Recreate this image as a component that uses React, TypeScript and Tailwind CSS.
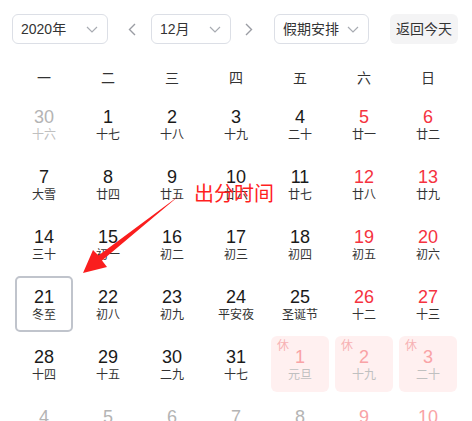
import React from 'react';

type Day = { n: number; lunar: string; kind: 'normal' | 'weekend' | 'out' | 'holiday' | 'outWeekend'; rest?: boolean; selected?: boolean };

const FONT = { fontFamily: '"Liberation Sans", "Noto Sans CJK SC", sans-serif' };

const rows: Day[][] = [
  [
    { n: 30, lunar: '十六', kind: 'out' },
    { n: 1, lunar: '十七', kind: 'normal' },
    { n: 2, lunar: '十八', kind: 'normal' },
    { n: 3, lunar: '十九', kind: 'normal' },
    { n: 4, lunar: '二十', kind: 'normal' },
    { n: 5, lunar: '廿一', kind: 'weekend' },
    { n: 6, lunar: '廿二', kind: 'weekend' },
  ],
  [
    { n: 7, lunar: '大雪', kind: 'normal' },
    { n: 8, lunar: '廿四', kind: 'normal' },
    { n: 9, lunar: '廿五', kind: 'normal' },
    { n: 10, lunar: '廿六', kind: 'normal' },
    { n: 11, lunar: '廿七', kind: 'normal' },
    { n: 12, lunar: '廿八', kind: 'weekend' },
    { n: 13, lunar: '廿九', kind: 'weekend' },
  ],
  [
    { n: 14, lunar: '三十', kind: 'normal' },
    { n: 15, lunar: '初一', kind: 'normal' },
    { n: 16, lunar: '初二', kind: 'normal' },
    { n: 17, lunar: '初三', kind: 'normal' },
    { n: 18, lunar: '初四', kind: 'normal' },
    { n: 19, lunar: '初五', kind: 'weekend' },
    { n: 20, lunar: '初六', kind: 'weekend' },
  ],
  [
    { n: 21, lunar: '冬至', kind: 'normal', selected: true },
    { n: 22, lunar: '初八', kind: 'normal' },
    { n: 23, lunar: '初九', kind: 'normal' },
    { n: 24, lunar: '平安夜', kind: 'normal' },
    { n: 25, lunar: '圣诞节', kind: 'normal' },
    { n: 26, lunar: '十二', kind: 'weekend' },
    { n: 27, lunar: '十三', kind: 'weekend' },
  ],
  [
    { n: 28, lunar: '十四', kind: 'normal' },
    { n: 29, lunar: '十五', kind: 'normal' },
    { n: 30, lunar: '二九', kind: 'normal' },
    { n: 31, lunar: '十七', kind: 'normal' },
    { n: 1, lunar: '元旦', kind: 'holiday', rest: true },
    { n: 2, lunar: '十九', kind: 'holiday', rest: true },
    { n: 3, lunar: '二十', kind: 'holiday', rest: true },
  ],
  [
    { n: 4, lunar: '廿一', kind: 'out' },
    { n: 5, lunar: '廿二', kind: 'out' },
    { n: 6, lunar: '廿三', kind: 'out' },
    { n: 7, lunar: '廿四', kind: 'out' },
    { n: 8, lunar: '廿五', kind: 'out' },
    { n: 9, lunar: '廿六', kind: 'outWeekend' },
    { n: 10, lunar: '廿七', kind: 'outWeekend' },
  ],
];

function ChevronDown() {
  return (
    <svg width="12" height="7" viewBox="0 0 12 7" fill="none">
      <polyline points="1,1 6,6 11,1" stroke="#a8abb2" strokeWidth="1.2" />
    </svg>
  );
}

function Select({ label, width }: { label: string; width: string }) {
  return (
    <div className={`${width} h-[30px] flex items-center justify-between border border-[#dcdfe6] rounded-[6px] pl-[8px] pr-[9px] text-[14px] text-[#333]`}>
      <span>{label}</span>
      <ChevronDown />
    </div>
  );
}

function Cell({ d }: { d: Day }) {
  const numColor =
    d.kind === 'weekend' ? 'text-[#f5333f]' :
    d.kind === 'out' ? 'text-[#b4b4b4]' :
    d.kind === 'holiday' || d.kind === 'outWeekend' ? 'text-[#f9a3a6]' : 'text-[#1a1a1a]';
  const lunarColor =
    d.kind === 'out' || d.kind === 'holiday' || d.kind === 'outWeekend' ? 'text-[#c0c0c0]' : 'text-[#333]';
  const box = d.selected
    ? 'border-2 border-[#c0c4cc] rounded-[5px] pt-[9px]'
    : d.rest
    ? 'bg-[#fff0f0] rounded-[6px] pt-[11px]'
    : 'pt-[11px]';
  return (
    <div className="h-[60px] px-[3px] py-[2px]">
      <div className={`relative h-[56px] flex flex-col items-center ${box}`}>
        {d.rest && <span className="absolute left-[6px] top-[3px] text-[12px] leading-[14px] text-[#f7b2b4]">休</span>}
        <span className={`text-[18px] leading-[20px] ${numColor}`}>{d.n}</span>
        <span className={`text-[12px] leading-[16px] ${lunarColor}`}>{d.lunar}</span>
      </div>
    </div>
  );
}

export default function App() {
  return (
    <div className="relative w-[472px] h-[421px] overflow-hidden bg-white" style={FONT}>
      <div className="flex items-center pt-[14px] pl-[12px]">
        <Select label="2020年" width="w-[96px]" />
        <svg className="ml-[20px]" width="8" height="13" viewBox="0 0 8 13" fill="none">
          <polyline points="7,1 1.5,6.5 7,12" stroke="#9a9ca3" strokeWidth="1.4" />
        </svg>
        <div className="ml-[15px]">
          <Select label="12月" width="w-[80px]" />
        </div>
        <svg className="ml-[14px]" width="8" height="13" viewBox="0 0 8 13" fill="none">
          <polyline points="1,1 6.5,6.5 1,12" stroke="#9a9ca3" strokeWidth="1.4" />
        </svg>
        <div className="ml-[21px]">
          <Select label="假期安排" width="w-[95px]" />
        </div>
        <button className="ml-[21px] w-[68px] h-[30px] rounded-[6px] bg-[#f4f4f5] text-[14px] text-[#333]">返回今天</button>
      </div>

      <div className="pl-[12px] w-[460px]">
        <div className="grid grid-cols-7 mt-[18px] h-[32px] items-center text-[14px] text-[#333]">
          {['一', '二', '三', '四', '五', '六', '日'].map(w => (
            <div key={w} className="text-center">{w}</div>
          ))}
        </div>
        <div className="grid grid-cols-7">
          {rows.flat().map((d, i) => (
            <Cell key={i} d={d} />
          ))}
        </div>
      </div>

      {/* annotation */}
      <span className="absolute left-[194px] top-[182px] text-[20px] leading-[24px] text-[#ff1f1f]">出分时间</span>
      <svg className="absolute left-0 top-0 pointer-events-none" width="472" height="421">
        <polygon points="83,273 93,250 98.5,255.5 180,195 102,260.5 107,267" fill="#fa1e1e" />
      </svg>
    </div>
  );
}
